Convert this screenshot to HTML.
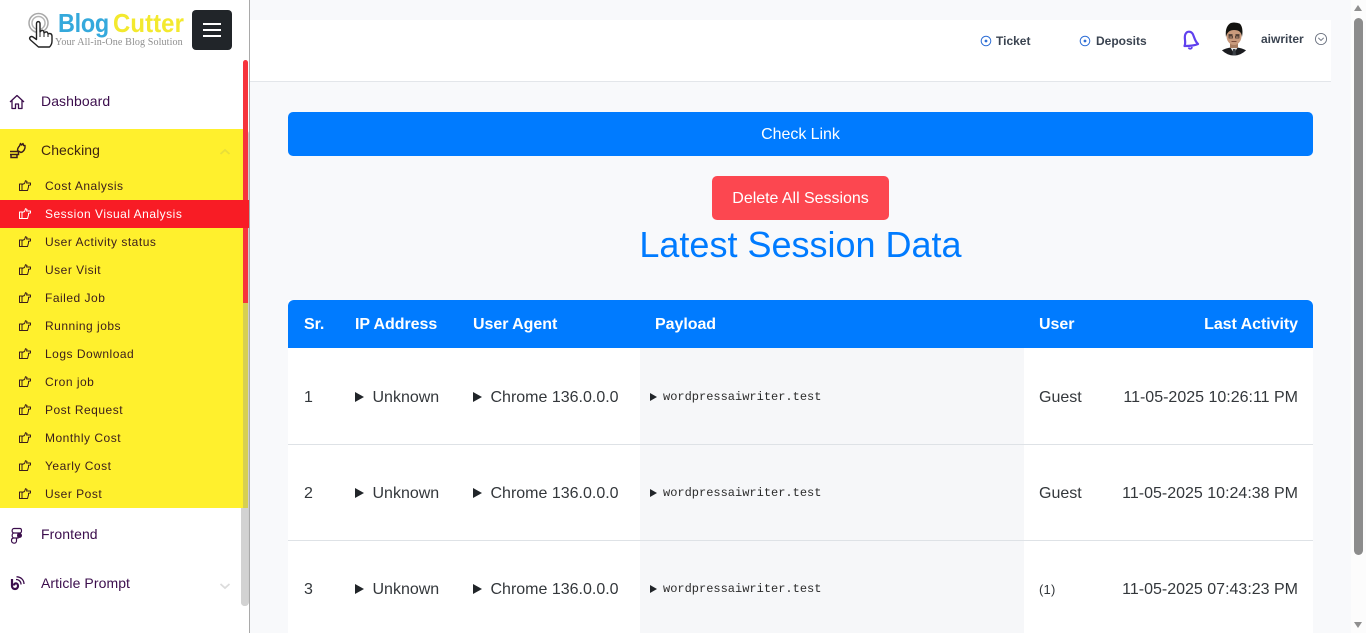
<!DOCTYPE html>
<html><head><meta charset="utf-8"><title>Blog Cutter</title>
<style>
*{box-sizing:border-box}
html,body{margin:0;padding:0;width:1366px;height:633px;overflow:hidden;background:#f8f9fb;font-family:"Liberation Sans",sans-serif;color:#212529}
.a{position:absolute;white-space:nowrap}
#side{position:absolute;left:0;top:0;width:250px;height:633px;background:#fff;border-right:1px solid #a9a9a9;overflow:hidden}
.m{position:absolute;left:41px;font-size:14px;letter-spacing:.08px;color:#3b0d4c;line-height:16px}
.s{position:absolute;left:45px;font-size:12px;letter-spacing:.5px;color:#3a1c1c;line-height:14px}
.hd{position:absolute;top:316px;font-size:16px;font-weight:bold;color:#fff;line-height:18px;white-space:nowrap;letter-spacing:-.05px}
.c{position:absolute;font-size:16px;color:#33373b;line-height:18px;white-space:nowrap}
.tri{position:absolute;width:0;height:0;border-left:9px solid #212529;border-top:5px solid transparent;border-bottom:5px solid transparent}
.tris{position:absolute;width:0;height:0;border-left:7px solid #212529;border-top:4px solid transparent;border-bottom:4px solid transparent}
.mono{position:absolute;left:663px;font:12px "Liberation Mono",monospace;color:#2b2b2b;line-height:14px;white-space:nowrap}
</style></head><body>

<!-- top bar -->
<div class="a" style="left:250px;top:20px;width:1081px;height:62px;background:#fff;border-bottom:1px solid #e3e6ea"></div>
<svg class="a" style="left:980px;top:35px" width="12" height="12" viewBox="0 0 12 12"><circle cx="6" cy="6" r="4.800" fill="none" stroke="#2f6fd6" stroke-width="1"/><circle cx="6" cy="6" r="1.400" fill="#2f6fd6"/></svg>
<div class="a" style="left:996px;top:34px;font-size:12px;font-weight:bold;color:#3a4350;line-height:15px">Ticket</div>
<svg class="a" style="left:1079px;top:35px" width="12" height="12" viewBox="0 0 12 12"><circle cx="6" cy="6" r="4.800" fill="none" stroke="#2f6fd6" stroke-width="1"/><circle cx="6" cy="6" r="1.400" fill="#2f6fd6"/></svg>
<div class="a" style="left:1096px;top:34px;font-size:12px;font-weight:bold;color:#3a4350;line-height:15px">Deposits</div>
<svg class="a" style="left:1180px;top:29px" width="20" height="22" viewBox="0 0 20 22"><path d="M4.500 17C6.500 13 3.500 8.500 5.500 5C7 2 10.500 2 12.500 4.500C14.500 8 14.500 12 18 15C14 17 9 17 4.500 17Z" fill="none" stroke="#5f40ee" stroke-width="2.200" stroke-linejoin="round"/><path d="M8.500 18.500C9.500 20.500 11.500 20 12 18" fill="none" stroke="#5f40ee" stroke-width="1.800"/></svg>
<svg class="a" style="left:1217px;top:22px" width="34" height="34" viewBox="0 0 34 34"><defs><clipPath id="av"><circle cx="17" cy="17" r="16.500"/></clipPath></defs><g clip-path="url(#av)"><rect width="34" height="34" fill="#fff"/><path d="M0 34C2 28 9 26 17 25C25 26 32 28 34 34Z" fill="#1b1c20"/><path d="M13 25L17 31L21 25Z" fill="#e8e8e8"/><path d="M16 27H18.500L19 34H15.500Z" fill="#3a3f45"/><rect x="13" y="20" width="8" height="6" fill="#a87c60"/><ellipse cx="17" cy="14" rx="7.500" ry="9" fill="#c99a7c"/><path d="M9 15C7.500 4 13 0 18 0C24.500 0 26.500 6 25 15C24.500 10 22 8 17 8C13 8 10 10 9 15Z" fill="#14130f"/><path d="M11.500 13H15.500M18.500 13H22.500" stroke="#1d1815" stroke-width="1.300"/><path d="M12 14.200H15.500V16H12ZM18.500 14.200H22V16H18.500Z" fill="none" stroke="#3a2c26" stroke-width=".7"/><path d="M14.500 19.500H19.500" stroke="#7a4a3a" stroke-width="1"/></g></svg>
<div class="a" style="left:1261px;top:32px;font-size:12px;font-weight:bold;color:#3a4350;line-height:15px">aiwriter</div>
<svg class="a" style="left:1314px;top:32px" width="14" height="14" viewBox="0 0 14 14"><circle cx="7" cy="7" r="5.600" fill="none" stroke="#6b7280" stroke-width=".9"/><path d="M4.300 5.800L7 8.500L9.700 5.800" fill="none" stroke="#6b7280" stroke-width=".9"/></svg>

<!-- main -->
<div class="a" style="left:288px;top:112px;width:1025px;height:44px;background:#007bff;border-radius:5px;color:#fff;font-size:16px;line-height:44px;text-align:center;padding-top:1px;letter-spacing:-.05px">Check Link</div>
<div class="a" style="left:712px;top:176px;width:177px;height:44px;background:#fc4750;border-radius:5px;color:#fff;font-size:16px;line-height:43px;text-align:center;padding-top:1px;letter-spacing:-.03px">Delete All Sessions</div>
<div class="a" style="left:288px;top:223px;width:1025px;text-align:center;font-size:36px;line-height:43px;color:#007bff">Latest Session Data</div>

<!-- table -->
<div class="a" style="left:288px;top:300px;width:1025px;height:333px;background:#fff"></div>
<div class="a" style="left:640px;top:348px;width:384px;height:285px;background:#f6f7f9"></div>
<div class="a" style="left:288px;top:300px;width:1025px;height:48px;background:#007bff;border-radius:6px 6px 0 0"></div>
<div class="a" style="left:288px;top:444px;width:1025px;height:1px;background:#dee2e6"></div>
<div class="a" style="left:288px;top:540px;width:1025px;height:1px;background:#dee2e6"></div>

<div class="hd" style="left:304px">Sr.</div>
<div class="hd" style="left:355px">IP Address</div>
<div class="hd" style="left:473px">User Agent</div>
<div class="hd" style="left:655px">Payload</div>
<div class="hd" style="left:1039px">User</div>
<div class="hd" style="right:68px">Last Activity</div>

<div class="c" style="left:304px;top:389px">1</div>
<div class="tri" style="left:355px;top:392px"></div><div class="c" style="left:372.500px;top:389px">Unknown</div>
<div class="tri" style="left:473px;top:392px"></div><div class="c" style="left:490.500px;top:389px">Chrome 136.0.0.0</div>
<div class="tris" style="left:650px;top:393px"></div><div class="mono" style="top:390px">wordpressaiwriter.test</div>
<div class="c" style="left:1039px;top:389px">Guest</div>
<div class="c" style="right:68px;top:389px">11-05-2025 10:26:11 PM</div>

<div class="c" style="left:304px;top:485px">2</div>
<div class="tri" style="left:355px;top:488px"></div><div class="c" style="left:372.500px;top:485px">Unknown</div>
<div class="tri" style="left:473px;top:488px"></div><div class="c" style="left:490.500px;top:485px">Chrome 136.0.0.0</div>
<div class="tris" style="left:650px;top:489px"></div><div class="mono" style="top:486px">wordpressaiwriter.test</div>
<div class="c" style="left:1039px;top:485px">Guest</div>
<div class="c" style="right:68px;top:485px">11-05-2025 10:24:38 PM</div>

<div class="c" style="left:304px;top:581px">3</div>
<div class="tri" style="left:355px;top:584px"></div><div class="c" style="left:372.500px;top:581px">Unknown</div>
<div class="tri" style="left:473px;top:584px"></div><div class="c" style="left:490.500px;top:581px">Chrome 136.0.0.0</div>
<div class="tris" style="left:650px;top:585px"></div><div class="mono" style="top:582px">wordpressaiwriter.test</div>
<div class="c" style="left:1039px;top:582px;font-size:13px;line-height:15px;letter-spacing:.2px">(1)</div>
<div class="c" style="right:68px;top:581px">11-05-2025 07:43:23 PM</div>

<!-- page scrollbar -->
<div class="a" style="left:1351px;top:0;width:15px;height:633px;background:#fcfcfc"></div>
<div class="a" style="left:1354px;top:18px;width:9px;height:537px;background:#8c8c8c;border-radius:5px"></div>
<div class="a" style="left:1354px;top:5px;width:0;height:0;border-left:4.500px solid transparent;border-right:4.500px solid transparent;border-bottom:6px solid #8f8f8f"></div>
<div class="a" style="left:1354px;top:622px;width:0;height:0;border-left:4.500px solid transparent;border-right:4.500px solid transparent;border-top:6px solid #8f8f8f"></div>

<!-- sidebar -->
<div id="side">
  <!-- logo -->
  <svg style="position:absolute;left:27px;top:10px" width="34" height="40" viewBox="0 0 34 40">
    <circle cx="11.500" cy="13" r="9.500" fill="none" stroke="#a8a8a8" stroke-width="1.500"/>
    <circle cx="11.500" cy="13" r="6.500" fill="none" stroke="#b5b5b5" stroke-width="1.500"/>
    <path d="M9.500 26V13.500C9.500 11 13 11 13 13.500V22L14.500 20.500C16 20 17 21 17 23L18.500 22C20 21.500 21 22.500 21 24L22.500 23.500C24 23.500 25 24.500 25 26.500V31C25 34 24 35.500 22.500 37H11.500L3.500 30C1.500 28 3.500 25.500 6 27L9.500 29.500Z" fill="#fff" stroke="#222" stroke-width="1.400" stroke-linejoin="round"/>
    <path d="M13 22V27M17 23V27M21 24V27" stroke="#222" stroke-width="1"/>
  </svg>
  <div class="a" style="left:58px;top:9px;font-size:26px;font-weight:bold;line-height:29px;color:#35a9dc;letter-spacing:-.3px;transform:scaleX(.9);transform-origin:0 0">Blog</div>
  <div class="a" style="left:113px;top:9px;font-size:26px;font-weight:bold;line-height:29px;color:#f3e92e;letter-spacing:.1px;transform:scaleX(.92);transform-origin:0 0">Cutter</div>
  <div class="a" style="left:55px;top:37px;font:10.100px/12px 'Liberation Serif',serif;color:#8f8f8f;letter-spacing:.1px">Your All-in-One Blog Solution</div>
  <div class="a" style="left:192px;top:10px;width:40px;height:40px;background:#212529;border-radius:4px"></div>
  <div class="a" style="left:203px;top:23px;width:18px;height:2px;background:#fff"></div>
  <div class="a" style="left:203px;top:29px;width:18px;height:2px;background:#fff"></div>
  <div class="a" style="left:203px;top:35px;width:18px;height:2px;background:#fff"></div>

  <svg style="position:absolute;left:9px;top:94px" width="16" height="16" viewBox="0 0 16 16"><path d="M1 8L8 1.500L15 8M3 6.500V14.500H6.500V10H9.500V14.500H13V6.500" fill="none" stroke="#3b0d4c" stroke-width="1.300" stroke-linejoin="round"/></svg>
  <div class="m" style="top:93px">Dashboard</div>

  <div class="a" style="left:0;top:129px;width:243px;height:379px;background:#fff02d"></div>
  <div class="a" style="left:0;top:200px;width:249px;height:28px;background:#f81c25"></div>

  <svg style="position:absolute;left:9px;top:142px" width="18" height="18" viewBox="0 0 18 18"><path d="M1 9.500H9.500M9.500 9.500V12.500H1M2 13V15.500H8V12.500" fill="none" stroke="#3a1c1c" stroke-width="1.500"/><path d="M8.500 8.500C8.500 6.500 9.500 5 10.500 4L11.500 1.500L12.500 3L14 1.500L14.500 3.500L16 3.500C16.500 6.500 15 9.500 12 10.500Z" fill="none" stroke="#3a1c1c" stroke-width="1.400" stroke-linejoin="round"/></svg>
  <div class="m" style="top:142px;color:#3f2410">Checking</div>
  <svg style="position:absolute;left:219px;top:148px" width="12" height="8" viewBox="0 0 12 8"><path d="M1.500 6L6 2L10.500 6" fill="none" stroke="#e8de3a" stroke-width="1.800"/></svg>

  <div class="s" style="top:179px">Cost Analysis</div>
  <div class="s" style="top:207px;color:#fff">Session Visual Analysis</div>
  <div class="s" style="top:235px">User Activity status</div>
  <div class="s" style="top:263px">User Visit</div>
  <div class="s" style="top:291px">Failed Job</div>
  <div class="s" style="top:319px">Running jobs</div>
  <div class="s" style="top:347px">Logs Download</div>
  <div class="s" style="top:375px">Cron job</div>
  <div class="s" style="top:403px">Post Request</div>
  <div class="s" style="top:431px">Monthly Cost</div>
  <div class="s" style="top:459px">Yearly Cost</div>
  <div class="s" style="top:487px">User Post</div>

  <svg style="position:absolute;left:0;top:0;pointer-events:none" width="40" height="510" viewBox="0 0 40 510">
    <defs><path id="ph" d="M.5 4H3V10.500H.5ZM3 4.500L5.500 3.500L6.500 .7L8 1.500L7.500 3H11.500V5L9.500 5.200V7L8.500 10.500H3" fill="none" stroke-width="1" stroke-linejoin="round"/></defs>
    <use href="#ph" x="19" y="180" stroke="#3a1c1c"/>
    <use href="#ph" x="19" y="208" stroke="#fff"/>
    <use href="#ph" x="19" y="236" stroke="#3a1c1c"/>
    <use href="#ph" x="19" y="264" stroke="#3a1c1c"/>
    <use href="#ph" x="19" y="292" stroke="#3a1c1c"/>
    <use href="#ph" x="19" y="320" stroke="#3a1c1c"/>
    <use href="#ph" x="19" y="348" stroke="#3a1c1c"/>
    <use href="#ph" x="19" y="376" stroke="#3a1c1c"/>
    <use href="#ph" x="19" y="404" stroke="#3a1c1c"/>
    <use href="#ph" x="19" y="432" stroke="#3a1c1c"/>
    <use href="#ph" x="19" y="460" stroke="#3a1c1c"/>
    <use href="#ph" x="19" y="488" stroke="#3a1c1c"/>
  </svg>

  <svg style="position:absolute;left:10px;top:527px" width="14" height="18" viewBox="0 0 14 18"><path d="M4 1.500H10C12 1.500 12 6 10 6H4C1.500 6 1.500 1.500 4 1.500ZM4 6H8V11H4C1.500 11 1.500 6 4 6ZM4 11H6.500V14C6.500 17 1.500 17 1.500 13.500C1.500 12 2.500 11 4 11Z" fill="none" stroke="#3b0d4c" stroke-width="1.200"/><circle cx="9.500" cy="8.500" r="2.500" fill="#3b0d4c"/></svg>
  <div class="m" style="top:526px">Frontend</div>

  <svg style="position:absolute;left:10px;top:576px" width="15" height="15" viewBox="0 0 15 15"><path d="M2 3V10C2 14 8 14 8 10C8 6.500 4 6.500 4 9.500" fill="none" stroke="#3b0d4c" stroke-width="2.200"/><path d="M6 3.500C9 3.500 11 5.500 11 8.500M6.500 .8C11 .8 14 4 14 8" fill="none" stroke="#3b0d4c" stroke-width="1.300"/></svg>
  <div class="m" style="top:575px">Article Prompt</div>
  <svg style="position:absolute;left:219px;top:582px" width="12" height="8" viewBox="0 0 12 8"><path d="M1.500 2L6 6L10.500 2" fill="none" stroke="#dcdcdc" stroke-width="1.800"/></svg>

  <!-- sidebar scrollbar -->
  <div class="a" style="left:241px;top:130px;width:8px;height:476px;background:#cfcfcf;border-radius:4px"></div>
  <div class="a" style="left:243px;top:60px;width:5px;height:243px;background:#f6343c;border-radius:3px 3px 0 0"></div>
  <div class="a" style="left:241px;top:129px;width:2px;height:379px;background:#fff02d"></div>
  <div class="a" style="left:243px;top:303px;width:5px;height:205px;background:#d6cf52"></div>
  <div class="a" style="left:241px;top:508px;width:7px;height:98px;background:#d2d2d2;border-radius:0 0 4px 4px"></div>
  <div class="a" style="left:241px;top:200px;width:8px;height:28px;background:#f81c25"></div>
</div>
</body></html>
